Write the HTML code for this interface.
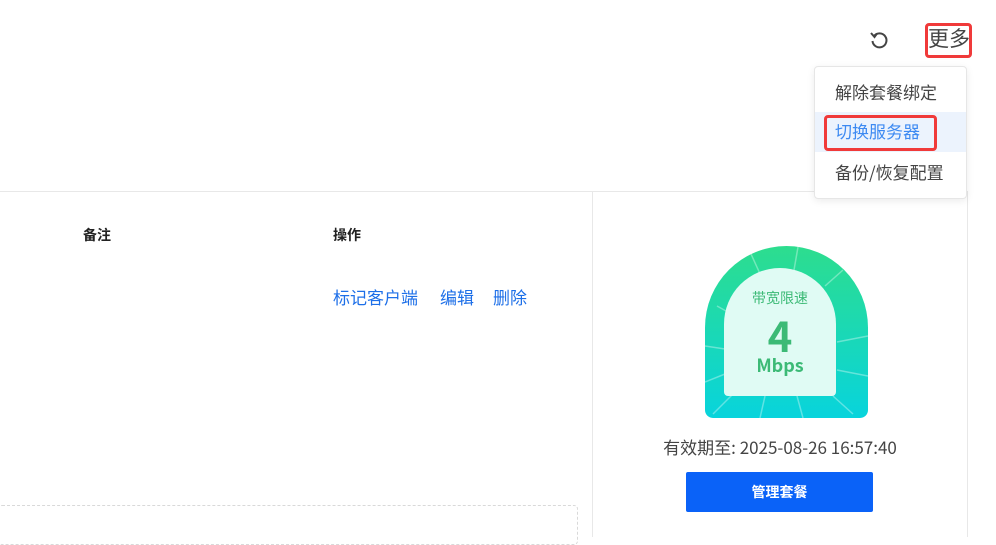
<!DOCTYPE html>
<html><head><meta charset="utf-8"><style>
*{margin:0;padding:0;box-sizing:border-box}
body{width:996px;height:537px;background:#fff;position:relative;overflow:hidden;font-family:"Noto Sans CJK SC","Liberation Sans",sans-serif}
.a{position:absolute;line-height:1.2}
</style></head><body>
<div class="a" style="left:0;top:191px;width:968px;height:1px;background:#e8e8e8"></div>
<div class="a" style="left:592px;top:191px;width:1px;height:346px;background:#e8e8e8"></div>
<div class="a" style="left:967px;top:191px;width:1px;height:346px;background:#e8e8e8"></div>
<div class="a" style="left:-2px;top:505px;width:580px;height:40px;border:1px dashed #d9d9d9;border-radius:4px"></div>
<div class="a" style="left:83px;top:227px;font-size:14px;font-weight:bold;color:#222">备注</div>
<div class="a" style="left:333px;top:227px;font-size:14px;font-weight:bold;color:#222">操作</div>
<div class="a" style="left:333px;top:287px;font-size:17px;color:#1d6fe8">标记客户端</div>
<div class="a" style="left:440px;top:287px;font-size:17px;color:#1d6fe8">编辑</div>
<div class="a" style="left:493px;top:287px;font-size:17px;color:#1d6fe8">删除</div>
<svg class="a" style="left:868px;top:29px" width="22" height="22" viewBox="0 0 22 22"><path d="M6 7 A7 7 0 1 1 4.5 12" fill="none" stroke="#444" stroke-width="2"/><path d="M3 4 L6.5 8 L9 4.5" fill="none" stroke="#444" stroke-width="2"/></svg>
<div class="a" style="left:925px;top:23px;width:47px;height:35px;border:3px solid #f03a3a;border-radius:4px"></div>
<div class="a" style="left:928px;top:26px;font-size:21px;color:#444">更多</div>
<div class="a" style="left:814px;top:66px;width:153px;height:133px;background:#fff;border:1px solid #e6e6e6;border-radius:4px;box-shadow:0 2px 8px rgba(0,0,0,.08)"></div>
<div class="a" style="left:815px;top:112px;width:151px;height:40px;background:#ecf3fd"></div>
<div class="a" style="left:835px;top:82px;font-size:17px;color:#444">解除套餐绑定</div>
<div class="a" style="left:824px;top:115px;width:113px;height:36px;border:3px solid #f03a3a;border-radius:4px"></div>
<div class="a" style="left:835px;top:121px;font-size:17px;color:#3d8af2">切换服务器</div>
<div class="a" style="left:835px;top:162px;font-size:17px;color:#444">备份/恢复配置</div>
<div class="a" style="left:705px;top:246px;width:163px;height:172px;border-radius:82px 82px 8px 8px;background:linear-gradient(#2ddd8e,#08d4dc);overflow:hidden"></div>
<svg class="a" style="left:705px;top:246px" width="163" height="172"><g stroke="rgba(255,255,255,.35)" stroke-width="1.5">
<line x1="46" y1="8" x2="56" y2="30"/><line x1="93" y1="1" x2="89" y2="24"/><line x1="138" y1="24" x2="120" y2="40"/><line x1="12" y1="60" x2="30" y2="70"/><line x1="163" y1="90" x2="132" y2="96"/><line x1="0" y1="100" x2="20" y2="103"/><line x1="0" y1="136" x2="20" y2="128"/><line x1="163" y1="130" x2="132" y2="124"/><line x1="8" y1="168" x2="28" y2="148"/><line x1="55" y1="172" x2="60" y2="150"/><line x1="98" y1="172" x2="92" y2="150"/><line x1="148" y1="168" x2="128" y2="150"/></g></svg>
<div class="a" style="left:724px;top:268px;width:112px;height:128px;border-radius:56px 56px 4px 4px;background:#e0fbf4"></div>
<div class="a" style="left:724px;top:290px;width:112px;text-align:center;font-size:14px;color:#3cba76">带宽限速</div>
<div class="a" style="left:724px;top:310px;width:112px;text-align:center;font-size:42px;font-weight:bold;color:#3cba76;line-height:50px">4</div>
<div class="a" style="left:724px;top:355px;width:112px;text-align:center;font-size:18px;font-weight:bold;color:#3cba76">Mbps</div>
<div class="a" style="left:592px;top:437px;width:376px;text-align:center;font-size:17px;color:#444">有效期至: 2025-08-26 16:57:40</div>
<div class="a" style="left:686px;top:472px;width:187px;height:40px;background:#0a62f8;border-radius:2px;color:#fff;font-size:14px;font-weight:bold;text-align:center;line-height:40px">管理套餐</div>
</body></html>
